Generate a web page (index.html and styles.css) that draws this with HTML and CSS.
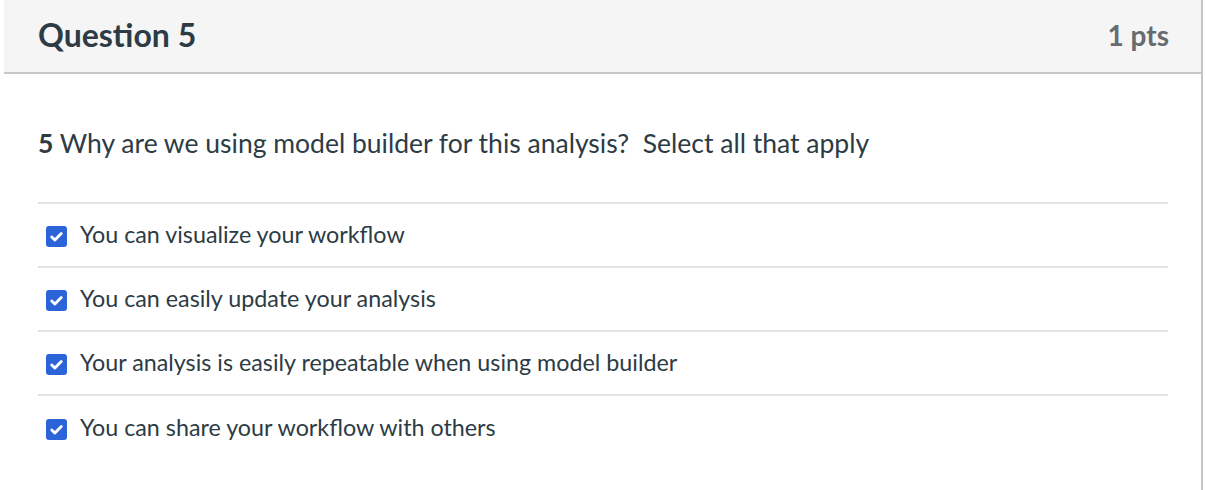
FILE: index.html
```html
<!DOCTYPE html>
<html>
<head>
<meta charset="utf-8">
<link rel="stylesheet" href="styles.css">
</head>
<body>
<div class="quiz">
  <div class="header">
    <h2 class="title">Question 5</h2>
    <div class="pts">1 pts</div>
  </div>
  <div class="content">
    <p class="question"><b>5</b> Why are we using model builder for this analysis?&nbsp; Select all that apply</p>
    <ul class="answers">
      <li class="answer"><span class="box"><svg viewBox="0 0 20 20" width="20" height="20"><path d="M5 10.5l3.3 3.3L15 6.8" fill="none" stroke="#fff" stroke-width="3" stroke-linecap="round" stroke-linejoin="round"/></svg></span>You can visualize your workflow</li>
      <li class="answer"><span class="box"><svg viewBox="0 0 20 20" width="20" height="20"><path d="M5 10.5l3.3 3.3L15 6.8" fill="none" stroke="#fff" stroke-width="3" stroke-linecap="round" stroke-linejoin="round"/></svg></span>You can easily update your analysis</li>
      <li class="answer"><span class="box"><svg viewBox="0 0 20 20" width="20" height="20"><path d="M5 10.5l3.3 3.3L15 6.8" fill="none" stroke="#fff" stroke-width="3" stroke-linecap="round" stroke-linejoin="round"/></svg></span>Your analysis is easily repeatable when using model builder</li>
      <li class="answer"><span class="box"><svg viewBox="0 0 20 20" width="20" height="20"><path d="M5 10.5l3.3 3.3L15 6.8" fill="none" stroke="#fff" stroke-width="3" stroke-linecap="round" stroke-linejoin="round"/></svg></span>You can share your workflow with others</li>
    </ul>
  </div>
</div>
</body>
</html>
```
FILE: styles.css
```css
html, body {
  margin: 0;
  padding: 0;
  background: #fff;
}
body {
  font-family: Lato, "Noto Sans", sans-serif;
  color: #2d3b45;
}
.quiz {
  margin-left: 4px;
  width: 1197px;
  border-right: 2px solid #c4c4c4;
  min-height: 490px;
}
.header {
  display: flex;
  justify-content: space-between;
  align-items: center;
  height: 72px;
  background: #f5f5f5;
  border-bottom: 2px solid #c7c7c7;
  padding: 0 32px 0 34px;
}
.title {
  margin: 0;
  font-size: 32px;
  line-height: 40px;
  margin-top: -2px;
  font-weight: 700;
  color: #2d3b45;
}
.pts {
  font-size: 28px;
  line-height: 40px;
  margin-top: -2px;
  font-weight: 700;
  color: #666b70;
}
.content {
  padding: 0 33px 0 34px;
}
.question {
  margin: 0;
  padding: 52px 0 42px;
  font-size: 26.5px;
  line-height: 34px;
  border-bottom: 2px solid #e3e3e3;
}
.question b {
  font-weight: 700;
}
.answers {
  list-style: none;
  margin: 0;
  padding: 0;
}
.answer {
  display: flex;
  align-items: center;
  box-sizing: border-box;
  height: 64px;
  padding-bottom: 2px;
  border-bottom: 2px solid #e3e3e3;
  font-size: 23.3px;
  line-height: 30px;
  padding-left: 8px;
}
.answer:last-child {
  border-bottom: none;
}
.box {
  display: flex;
  flex: none;
  width: 21px;
  height: 21px;
  margin-top: 4px;
  background: #2b63d9;
  border-radius: 3px;
  margin-right: 13px;
  align-items: center;
  justify-content: center;
}
.box svg {
  width: 19px;
  height: 19px;
}
```
